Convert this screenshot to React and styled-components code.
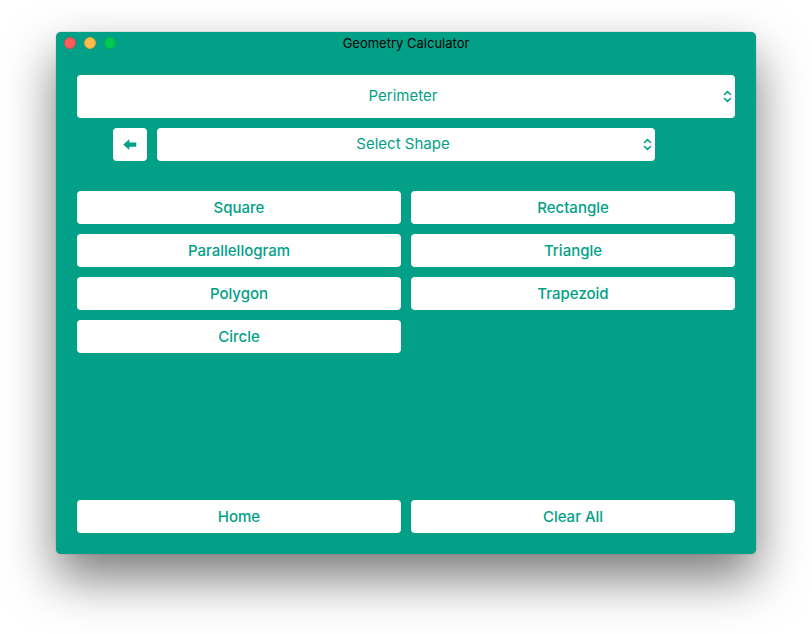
import React, { useState } from 'react';
import styled, { createGlobalStyle } from 'styled-components';

const teal = '#02a187';

const GlobalStyle = createGlobalStyle`
  * { box-sizing: border-box; }
  body {
    margin: 0;
    background: #fff;
    font-family: Inter, 'Liberation Sans', sans-serif;
  }
`;

const Desktop = styled.div`
  display: flex;
  min-height: 100vh;
  padding: 32px 56px 80px;
  overflow: hidden;
`;

const Window = styled.main`
  flex: 1;
  display: flex;
  flex-direction: column;
  min-width: 0;
  border-radius: 5px;
  background: ${teal};
  box-shadow: 0 0 1px rgba(0, 0, 0, 0.5), 0 24px 50px rgba(0, 0, 0, 0.52);
`;

const TitleBar = styled.header`
  display: grid;
  grid-template-columns: 1fr auto 1fr;
  align-items: center;
  height: 22px;
  padding: 0 8px;
`;

const WindowControls = styled.div`
  display: flex;
  gap: 8px;
`;

const WindowControl = styled.button`
  width: 12px;
  height: 12px;
  padding: 0;
  border: 1px solid ${(p) => p.$edge};
  border-radius: 50%;
  background: ${(p) => p.$fill};
`;

const Title = styled.h1`
  margin: 0;
  font-size: 13px;
  font-weight: 400;
  line-height: 22px;
  color: #000;
`;

const Content = styled.div`
  flex: 1;
  display: flex;
  flex-direction: column;
  padding: 21px;
`;

const ShapeRow = styled.div`
  display: flex;
  gap: 10px;
  margin: 10px 80px 30px 36px;
`;

const SelectBox = styled.div`
  position: relative;
  flex: ${(p) => (p.$grow ? 1 : 'none')};
`;

const Select = styled.select`
  display: block;
  width: 100%;
  height: ${(p) => (p.$tall ? 43 : 33)}px;
  padding: 0 6px 2px 0;
  border: 0;
  border-radius: 4px;
  appearance: none;
  background: #fff;
  color: ${teal};
  font-family: inherit;
  font-size: 15px;
  font-weight: 400;
  text-align: center;
  text-align-last: center;
`;

const Chevrons = styled.svg`
  position: absolute;
  top: 0;
  bottom: 0;
  right: 3px;
  margin: auto 0;
  pointer-events: none;
`;

const Button = styled.button`
  display: flex;
  align-items: center;
  justify-content: center;
  width: ${(p) => (p.$icon ? '34px' : 'auto')};
  height: 33px;
  padding: 0;
  border: 0;
  border-radius: 4px;
  background: #fff;
  color: ${teal};
  font-family: inherit;
  font-size: 15px;
  font-weight: 500;
`;

const ButtonGrid = styled.div`
  display: grid;
  grid-template-columns: 1fr 1fr;
  gap: 10px;
`;

const Footer = styled(ButtonGrid)`
  margin-top: auto;
`;

const shapes = ['Square', 'Rectangle', 'Parallellogram', 'Triangle', 'Polygon', 'Trapezoid', 'Circle'];

function Dropdown({ label, value, onChange, options, tall, grow }) {
  return (
    <SelectBox $grow={grow}>
      <Select aria-label={label} value={value} onChange={(e) => onChange(e.target.value)} $tall={tall}>
        {options.map((o) => (
          <option key={o}>{o}</option>
        ))}
      </Select>
      <Chevrons width="9" height="13" viewBox="0 0 9 13" fill="none" stroke={teal} strokeWidth="1.6" strokeLinecap="round" strokeLinejoin="round" aria-hidden="true">
        <path d="M1.5 4.5 4.5 1.7l3 2.8M1.5 8.5l3 2.8 3-2.8" />
      </Chevrons>
    </SelectBox>
  );
}

export default function App() {
  const [measure, setMeasure] = useState('Perimeter');
  const [shape, setShape] = useState('Select Shape');

  return (
    <>
      <GlobalStyle />
      <Desktop>
        <Window>
          <TitleBar>
            <WindowControls>
              <WindowControl aria-label="Close" $fill="#ff5c5c" $edge="#e04848" />
              <WindowControl aria-label="Minimize" $fill="#ffbd4c" $edge="#dfa03a" />
              <WindowControl aria-label="Zoom" $fill="#00ca56" $edge="#00b04a" />
            </WindowControls>
            <Title>Geometry Calculator</Title>
          </TitleBar>
          <Content>
            <Dropdown label="Measurement" value={measure} onChange={setMeasure} options={['Perimeter', 'Area', 'Volume']} tall />
            <ShapeRow>
              <Button $icon aria-label="Back">
                <svg width="14" height="12" viewBox="0 0 14 12" fill={teal} aria-hidden="true">
                  <path d="M.3 5.6 6.3.2v3.2h7v4.4h-7V11z" />
                </svg>
              </Button>
              <Dropdown label="Shape" value={shape} onChange={setShape} options={['Select Shape', ...shapes]} grow />
            </ShapeRow>
            <ButtonGrid>
              {shapes.map((s) => (
                <Button key={s} onClick={() => setShape(s)}>{s}</Button>
              ))}
            </ButtonGrid>
            <Footer>
              <Button onClick={() => setMeasure('Perimeter')}>Home</Button>
              <Button onClick={() => setShape('Select Shape')}>Clear All</Button>
            </Footer>
          </Content>
        </Window>
      </Desktop>
    </>
  );
}
